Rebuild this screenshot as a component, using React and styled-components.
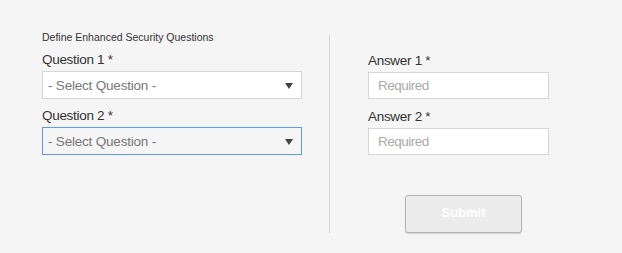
import React from "react";
import styled, { createGlobalStyle } from "styled-components";

const GlobalStyle = createGlobalStyle`
  html, body {
    margin: 0;
    background: #f5f5f5;
    font-family: "Liberation Sans", Arial, sans-serif;
  }
`;

const Page = styled.div`
  display: flex;
  padding: 30px 0 0 42px;
  height: 223px;
`;

const Left = styled.div`
  width: 260px;
  display: flex;
  flex-direction: column;
`;

const Divider = styled.div`
  width: 1px;
  background: #d4d4d4;
  margin: 5px 38px 20px 27px;
`;

const Right = styled.div`
  width: 181px;
  display: flex;
  flex-direction: column;
  padding-top: 23px;
`;

const Title = styled.div`
  font-size: 10.5px;
  color: #333;
  margin: 1px 0 9px;
  line-height: 12px;
`;

const Label = styled.div`
  font-size: 13.5px;
  letter-spacing: -0.3px;
  color: #333;
  line-height: 16px;
  margin-bottom: 3px;
`;

const Select = styled.div`
  height: 28px;
  box-sizing: border-box;
  border: 1px solid ${(p) => (p.$focused ? "#5b9bf0" : "#d6d6d6")};
  background: ${(p) => (p.$focused ? "#f5f5f5" : "#fff")};
  display: flex;
  align-items: center;
  justify-content: space-between;
  padding: 0 8px 0 5px;
  font-size: 13.5px;
  letter-spacing: -0.2px;
  color: #777;
  margin-bottom: 9px;
`;

const Arrow = styled.span`
  width: 0;
  height: 0;
  border-left: 4px solid transparent;
  border-right: 4px solid transparent;
  border-top: 6px solid #444;
  margin-top: 2px;
`;

const Input = styled.div`
  height: 27px;
  box-sizing: border-box;
  border: 1px solid #d6d6d6;
  background: #fff;
  display: flex;
  align-items: center;
  padding: 0 9px;
  font-size: 13.5px;
  letter-spacing: -0.5px;
  color: #aaa;
  margin-bottom: 10px;
`;

const Submit = styled.button`
  align-self: center;
  margin: 30px 0 0 10px;
  width: 117px;
  height: 38px;
  padding: 0 0 3px;
  border: 1px solid #b4b4b4;
  border-radius: 3px;
  background: #ececec;
  color: #fff;
  font-family: inherit;
  font-weight: bold;
  font-size: 13px;
  box-shadow: 0 1px 1px rgba(0, 0, 0, 0.15);
`;

function Question({ n, focused }) {
  return (
    <>
      <Label>Question {n} *</Label>
      <Select $focused={focused}>
        - Select Question -
        <Arrow />
      </Select>
    </>
  );
}

function Answer({ n }) {
  return (
    <>
      <Label>Answer {n} *</Label>
      <Input>Required</Input>
    </>
  );
}

export default function App() {
  return (
    <>
      <GlobalStyle />
      <Page>
        <Left>
          <Title>Define Enhanced Security Questions</Title>
          <Question n={1} />
          <Question n={2} focused />
        </Left>
        <Divider />
        <Right>
          <Answer n={1} />
          <Answer n={2} />
          <Submit>Submit</Submit>
        </Right>
      </Page>
    </>
  );
}
